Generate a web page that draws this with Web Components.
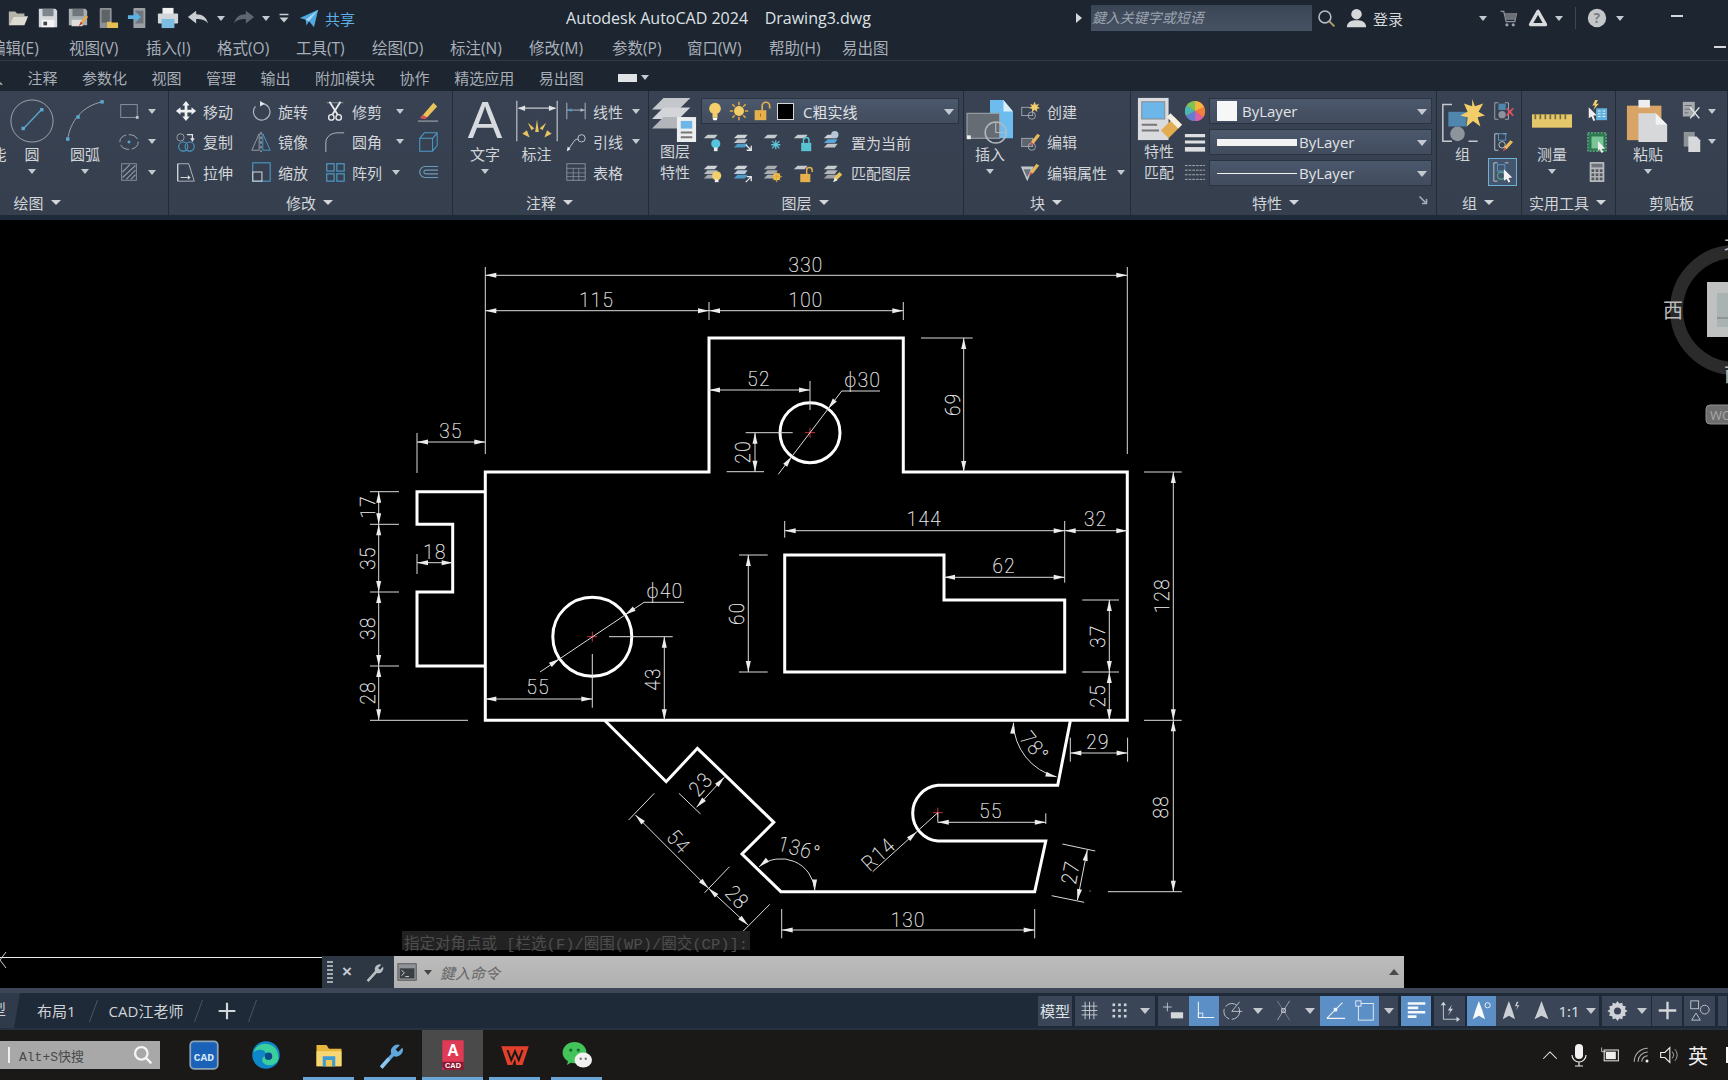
<!DOCTYPE html>
<html lang="zh">
<head>
<meta charset="utf-8">
<title>Autodesk AutoCAD 2024</title>
<style>
  html, body { margin: 0; height: 100%; background: #000; overflow: hidden; }
  body { font: 15px "Open Sans", "Noto Sans CJK SC", sans-serif; color: #c4c9cf; }
</style>
</head>
<body>

<cad-app>
  <cad-titlebar></cad-titlebar>
  <cad-menubar></cad-menubar>
  <cad-tabbar></cad-tabbar>

  <cad-ribbon>
    <ribbon-panel label="绘图" caret style="width:169px;--foot-pad:0 94px 0 0">
      <rb-big style="width:24px;margin-left:-13px">能</rb-big>
      <rb-big icon="circle" size="46" caret style="width:36px;margin-left:3px">圆</rb-big>
      <rb-big icon="arc" size="46" caret style="width:50px;margin-left:10px">圆弧</rb-big>
      <rb-col style="margin-left:8px">
        <rb-small icon="rect" caret="12"></rb-small>
        <rb-small icon="ellipse" caret="12"></rb-small>
        <rb-small icon="hatch" caret="12"></rb-small>
      </rb-col>
    </ribbon-panel>

    <ribbon-panel label="修改" caret style="width:284px">
      <rb-col style="width:75px;margin-left:6px">
        <rb-small icon="move">移动</rb-small>
        <rb-small icon="copy">复制</rb-small>
        <rb-small icon="stretch">拉伸</rb-small>
      </rb-col>
      <rb-col style="width:74px">
        <rb-small icon="rotate">旋转</rb-small>
        <rb-small icon="mirror">镜像</rb-small>
        <rb-small icon="scale">缩放</rb-small>
      </rb-col>
      <rb-col style="width:93px">
        <rb-small icon="trim" caret="18">修剪</rb-small>
        <rb-small icon="fillet" caret="18">圆角</rb-small>
        <rb-small icon="array" caret="14">阵列</rb-small>
      </rb-col>
      <rb-col>
        <rb-small icon="erase"></rb-small>
        <rb-small icon="box3d"></rb-small>
        <rb-small icon="offset"></rb-small>
      </rb-col>
    </ribbon-panel>

    <ribbon-panel label="注释" caret style="width:196px;--foot-pad:0 2px 0 0">
      <rb-big icon="bigA" size="46" caret style="width:36px;margin-left:14px">文字</rb-big>
      <rb-big icon="dim" size="44" style="width:37px;margin-left:15px">标注</rb-big>
      <rb-col style="margin-left:10px">
        <rb-small icon="linear" caret="13">线性</rb-small>
        <rb-small icon="leader" caret="13">引线</rb-small>
        <rb-small icon="table">表格</rb-small>
      </rb-col>
    </ribbon-panel>

    <ribbon-panel label="图层" caret style="width:315px">
      <rb-big icon="layers" size="46" lines="2" style="width:38px;margin-left:7px">图层<br>特性</rb-big>
      <rb-col style="margin-left:7px;width:258px">
        <rb-combo style="margin-top:2px;margin-bottom:3px">
          <cad-icon name="bulb" size="20" style="margin-left:3px"></cad-icon>
          <cad-icon name="sun" size="20" style="margin-left:4px"></cad-icon>
          <cad-icon name="lock" size="20" style="margin-left:4px"></cad-icon>
          <span class="swatch" style="display:inline-block;width:15px;height:15px;background:#000;border:1px solid #d5d7da;margin-left:4px"></span>
          <span style="margin-left:9px">C粗实线</span>
        </rb-combo>
        <rb-iconrow>
          <cad-icon name="lyOff"></cad-icon><cad-icon name="lyIso"></cad-icon><cad-icon name="lyFrz"></cad-icon><cad-icon name="lyLock"></cad-icon><cad-icon name="lyCur"></cad-icon>
          <span style="margin-left:-1px">置为当前</span>
        </rb-iconrow>
        <rb-iconrow>
          <cad-icon name="lyOn"></cad-icon><cad-icon name="lyUn"></cad-icon><cad-icon name="lyThaw"></cad-icon><cad-icon name="lyOpen"></cad-icon><cad-icon name="lyMatch"></cad-icon>
          <span style="margin-left:-1px">匹配图层</span>
        </rb-iconrow>
      </rb-col>
    </ribbon-panel>

    <ribbon-panel label="块" caret style="width:167px;--foot-pad:0 2px 0 0">
      <rb-big icon="insert" size="46" caret style="width:40px;margin-left:6px">插入</rb-big>
      <rb-col style="margin-left:9px">
        <rb-small icon="create">创建</rb-small>
        <rb-small icon="edit">编辑</rb-small>
        <rb-small icon="editattr" caret="14">编辑属性</rb-small>
      </rb-col>
    </ribbon-panel>

    <ribbon-panel label="特性" caret style="width:306px;--foot-pad:0 16px 0 0">
      <rb-big icon="match" size="46" lines="2" style="width:38px;margin-left:9px">特性<br>匹配</rb-big>
      <rb-col style="margin-left:6px;width:22px">
        <rb-small icon="wheel"></rb-small>
        <rb-small icon="lweight"></rb-small>
        <rb-small icon="ltype"></rb-small>
      </rb-col>
      <rb-col style="margin-left:3px;width:223px;gap:5px;padding-top:2px">
        <rb-combo><span class="white" style="display:inline-block;width:20px;height:20px;background:#f7f7f7;margin-left:7px"></span><span style="margin-left:5px">ByLayer</span></rb-combo>
        <rb-combo><span style="display:inline-block;width:80px;height:7px;background:#f2f2f2;margin-left:7px"></span><span style="margin-left:2px">ByLayer</span></rb-combo>
        <rb-combo><span style="display:inline-block;width:80px;height:1px;background:#f2f2f2;margin-left:7px"></span><span style="margin-left:2px">ByLayer</span></rb-combo>
      </rb-col>
      <cad-icon slot="corner" name="launch" size="12"></cad-icon>
    </ribbon-panel>

    <ribbon-panel label="组" caret style="width:85px">
      <rb-big icon="group" size="44" style="width:35px;margin-left:8px">组</rb-big>
      <rb-col style="margin-left:8px;align-items:center;width:29px">
        <rb-small icon="ungroup"></rb-small>
        <rb-small icon="groupedit"></rb-small>
        <rb-small icon="groupsel" style="outline:1px solid #6fb0d8;outline-offset:-1px;background:#44566d;width:29px;height:28px;justify-content:center;margin-top:1px"></rb-small>
      </rb-col>
    </ribbon-panel>

    <ribbon-panel label="实用工具" caret style="width:94px">
      <rb-big icon="ruler" size="40" caret style="width:40px;margin-left:10px">测量</rb-big>
      <rb-col style="margin-left:14px">
        <rb-small icon="quick"></rb-small>
        <rb-small icon="areasel"></rb-small>
        <rb-small icon="calc"></rb-small>
      </rb-col>
    </ribbon-panel>

    <ribbon-panel label="剪贴板" style="width:112px;--foot-pad:0 0 0 0">
      <rb-big icon="paste" size="46" caret style="width:36px;margin-left:14px">粘贴</rb-big>
      <rb-col style="margin-left:15px">
        <rb-small icon="cut" caret="9"></rb-small>
        <rb-small icon="clip" caret="9"></rb-small>
      </rb-col>
    </ribbon-panel>
  </cad-ribbon>

  <cad-canvas>
    <cad-command></cad-command>
  </cad-canvas>

  <cad-status>
    <status-btn w="34" text="模型"></status-btn>
    <status-group>
      <status-btn w="29" icon="grid"></status-btn><status-btn w="30" icon="dots"></status-btn><status-btn w="21" caret></status-btn>
    </status-group>
    <status-group>
      <status-btn w="31" icon="infer"></status-btn><status-btn w="30" icon="ortho" on></status-btn><status-btn w="28" icon="polar"></status-btn><status-btn w="21" caret></status-btn><status-btn w="31" icon="iso"></status-btn><status-btn w="21" caret></status-btn><status-btn w="30" icon="snap3" on></status-btn><status-btn w="29" icon="osnap" on></status-btn><status-btn w="19" caret></status-btn>
    </status-group>
    <status-btn w="30" icon="lwt" on></status-btn>
    <status-btn w="31" icon="ucs"></status-btn>
    <status-group style="margin-left:-1px">
      <status-btn w="29" icon="anno1" on></status-btn><status-btn w="30" icon="anno2"></status-btn><status-btn w="30" icon="anno3"></status-btn><status-btn w="26" text="1:1"></status-btn><status-btn w="17" caret></status-btn>
    </status-group>
    <status-group>
      <status-btn w="30" icon="gear"></status-btn><status-btn w="19" caret></status-btn>
    </status-group>
    <status-btn w="30" icon="plus" style="margin-left:-2px"></status-btn>
    <status-btn w="31" icon="shapes" style="margin-left:-1px"></status-btn>
    <status-btn w="9"></status-btn>
  </cad-status>

  <cad-taskbar></cad-taskbar>
</cad-app>

<script>
// Inline icon set. All drawn on a 24 x 24 box.
const S = 'fill="none" stroke="';
const lyr = (y, c) => `<path d="M6 ${y}h11l-3 4H2z" fill="${c}"/>`;
const stack = (a, b, c) => lyr(4, a) + lyr(9, b) + lyr(14, c);

const ICONS = {
  open: `<path d="M2 5h7l2 2h8v3H7L4 20H2z" fill="#b5b3aa"/><path d="M7 10h16l-4 10H3z" fill="#dedcd2"/>`,
  save: `<path d="M2 2h18l2 2v18H2z" fill="#d5d9dd"/><rect x="6" y="2" width="12" height="8" fill="#7f868d"/><rect x="5" y="14" width="14" height="8" fill="#f4f4f4"/><rect x="7" y="16" width="4" height="4" fill="#444"/>`,
  saveas: `<path d="M2 2h18l2 2v16H2z" fill="#a9aeb3"/><rect x="6" y="2" width="12" height="8" fill="#6f767c"/><rect x="5" y="14" width="12" height="7" fill="#ddd"/><path d="M13 21l2-5 6-7 2 2-6 7z" fill="#e8a94b"/><path d="M13 21l2-5 2 2z" fill="#c33"/>`,
  sheet: `<rect x="3" y="1" width="13" height="22" rx="1" fill="#8d9196"/><rect x="5" y="3" width="9" height="14" fill="#5e6368"/><path d="M11 16h4l1 1h7v6H11z" fill="#e6be52"/>`,
  imp: `<rect x="7" y="1" width="13" height="22" rx="1" fill="#9ba0a5"/><rect x="9" y="4" width="9" height="14" fill="#70767c"/><path d="M1 9h8V5l6 6-6 6v-4H1z" fill="#59b2e2"/>`,
  print: `<rect x="6" y="1" width="12" height="7" fill="#f0f0f0"/><rect x="1" y="7" width="22" height="11" rx="1" fill="#d2d6d9"/><rect x="5" y="13" width="14" height="10" fill="#7dbde2"/>`,
  undo: `<path d="M1 11l9-7v4c7 0 11 3 13 10-3-4-7-5-13-5v5z" fill="#c9cdd2"/>`,
  redo: `<path d="M23 11l-9-7v4C7 8 3 11 1 18c3-4 7-5 13-5v5z" fill="#5f666f"/>`,
  qatmenu: `<path d="M3 5h18" stroke="#c9cdd2" stroke-width="3"/><path d="M3 11h18l-9 10z" fill="#c9cdd2"/>`,
  share: `<path d="M1 12L23 2l-5 21-6-7-3 5-1-7z" fill="#4fa8e0"/><path d="M8 14L23 2 12 16z" fill="#a8d8f5"/>`,
  search: `<circle cx="10" cy="10" r="7.5" ${S}#b6bcc3" stroke-width="2"/><path d="M15.5 15.5L22 22" stroke="#b39a6a" stroke-width="2.4"/>`,
  user: `<circle cx="12" cy="7" r="6" fill="#d6d8da"/><path d="M1 22c0-6 5-8 11-8s11 2 11 8z" fill="#d6d8da"/>`,
  cart: `<path d="M2 3h4l3 13h11l2-10H7" ${S}#8f949a" stroke-width="1.6"/><path d="M7 5h15l-2 9H9z" fill="#6c7178"/><circle cx="10" cy="20" r="2" fill="#9a9fa5"/><circle cx="18" cy="20" r="2" fill="#9a9fa5"/>`,
  a360: `<path d="M12 4L3 20h18z" ${S}#d8dadd" stroke-width="4" stroke-linejoin="round"/>`,
  help: `<circle cx="12" cy="12" r="11" fill="#c4c7ca"/><text x="12" y="18" text-anchor="middle" font-size="16" font-weight="700" font-family="Open Sans" fill="#7a7e83">?</text>`,

  circle: `<circle cx="12" cy="12" r="11" ${S}#aab1b8" stroke-width=".45"/><path d="M7.5 16L17 6" stroke="#5aa7cf" stroke-width=".7"/><rect x="6.5" y="15" width="1.8" height="1.8" fill="#5aa7cf"/><rect x="16.2" y="5.200" width="1.8" height="1.8" fill="#5aa7cf"/>`,
  arc: `<path d="M3 22C4 12 11 4 21 2" ${S}#aab1b8" stroke-width=".45"/><rect x="2.100" y="20.500" width="1.8" height="1.8" fill="#5aa7cf"/><rect x="7.5" y="9" width="1.8" height="1.8" fill="#5aa7cf"/><rect x="20" y="1.100" width="1.8" height="1.8" fill="#5aa7cf"/>`,
  rect: `<rect x="3" y="5" width="18" height="14" ${S}#8b96a3" stroke-width="1"/><rect x="19.5" y="17.5" width="3" height="3" fill="#c4c9cf"/>`,
  ellipse: `<ellipse cx="12" cy="12" rx="10" ry="8" ${S}#a6afb9" stroke-dasharray="11 3" stroke-width="1"/><circle cx="12" cy="12" r="1.6" fill="#5aa7cf"/>`,
  hatch: `<rect x="4" y="3" width="16" height="18" ${S}#8b96a3"/><path d="M5 12l8-8M5 18L19 5M9 20l10-10M14 20l5-5" stroke="#8b96a3" stroke-width="1.4"/>`,
  move: `<path d="M12 1l4 5h-2.5v4.5H18V8l5 4-5 4v-2.5h-4.5V18H16l-4 5-4-5h2.5v-4.500H6V16l-5-4 5-4v2.500h4.500V6H8z" fill="#eef0f2"/>`,
  rotate: `<path d="M14 4a9 9 0 1 1-8 3" ${S}#aeb5bc" stroke-width="1.3"/><path d="M11 1l5 3-5 3z" fill="#e8eaec"/>`,
  trim: `<path d="M3 3h18" stroke="#7f8994" stroke-width="1.2"/><path d="M6 2l9 14M18 2L9 16" stroke="#e8eaec" stroke-width="2"/><circle cx="8" cy="19" r="3" ${S}#e8eaec" stroke-width="1.500"/><circle cx="16" cy="19" r="3" ${S}#e8eaec" stroke-width="1.500"/>`,
  erase: `<path d="M6 17L18 3l4 4-11 12z" fill="#e9c25a"/><path d="M3 20l3-4 5 3-2 2z" fill="#d4525c"/><path d="M1 23h22" stroke="#b7bdc3"/>`,
  copy: `<circle cx="6" cy="7" r="4" ${S}#9aa4ae"/><path d="M13 4h6v5" ${S}#dfe2e5" stroke-width="1.4"/><path d="M16.500 8l2.500 4 2.500-4z" fill="#dfe2e5"/><circle cx="9" cy="17" r="5" ${S}#4d9ac6" stroke-width="1.200"/><circle cx="16" cy="17" r="5" ${S}#4d9ac6" stroke-width="1.200"/>`,
  mirror: `<path d="M10 3v18H2z" ${S}#9aa4ae"/><path d="M14 3v18h8z" ${S}#4d9ac6"/><path d="M12 1v22" stroke="#d0d4d8" stroke-dasharray="3 2"/>`,
  fillet: `<path d="M2 23V13C2 6 8 2 15 2h7" ${S}#bcc2c8" stroke-width="1"/>`,
  box3d: `<path d="M3 8h14v14H3zM3 8l5-6h14v14l-5 6M17 8l5-6" ${S}#4d9ac6" stroke-width="1.100"/>`,
  stretch: `<path d="M3 3h12l6 19H3z" ${S}#b5bcc3"/><path d="M3 3v19" stroke="#e8eaec"/><path d="M6 18h8" stroke="#dfe2e5"/><path d="M14 15.500l3 2.500-3 2.500z" fill="#dfe2e5"/>`,
  scale: `<rect x="3" y="2" width="19" height="20" ${S}#4d9ac6" stroke-width="1.200"/><rect x="3" y="12" width="10" height="10" ${S}#c9cdd2" stroke-width="1.200"/>`,
  array: `<g ${S}#4d9ac6" stroke-width="1.300"><rect x="3" y="3" width="8" height="8"/><rect x="14" y="3" width="8" height="8"/><rect x="3" y="14" width="8" height="8"/><rect x="14" y="14" width="8" height="8"/></g>`,
  offset: `<path d="M23 6H9a6 6 0 0 0 0 12h14M23 10H9.500a2 2 0 0 0 0 4H23" ${S}#6c9bb8" stroke-width="1.300"/>`,
  bigA: `<text x="12" y="21" text-anchor="middle" font-size="27" font-family="Liberation Sans" font-weight="400" fill="#d7dade">A</text>`,
  dim: `<path d="M1 1v22M23 1v22" stroke="#c9cdd2" stroke-width=".6"/><path d="M2 5h20" stroke="#c9cdd2" stroke-width=".6"/><path d="M1.500 5l4-1.500v3zM22.500 5l-4-1.500v3z" fill="#dfe2e5"/><path d="M4 19l4 2-1.500-4zM20 19l-4 2 1.500-4zM12 11l-1 7h2z" fill="#e6c45f"/><path d="M7 13l2 4 1.500-1zM17 13l-2 4-1.500-1z" fill="#e6c45f"/>`,
  linear: `<path d="M2 3v18M22 3v18M2 11h20" stroke="#b5bcc3" stroke-width="1"/><path d="M3 11l4-2v4z" fill="#4d9ac6"/><path d="M21 11l-4-2v4z" fill="#b5bcc3"/>`,
  leader: `<path d="M3 21L10 11c1-2 3-2 5-2" ${S}#c9cdd2" stroke-width="1"/><path d="M2 22l1-5 3 3z" fill="#e8eaec"/><circle cx="18" cy="8" r="4" ${S}#c9cdd2"/>`,
  table: `<rect x="2" y="3" width="20" height="18" ${S}#8b96a3"/><path d="M2 8h20M2 13h20M2 17h20M9 8v13M15 8v13" stroke="#8b96a3" stroke-width=".8"/>`,
  layers: `<path d="M6 1h14l-6 6H0z" fill="#c4c7cb"/><path d="M6 6h14l-6 6H0z" fill="#d3d5d8"/><path d="M6 11h14l-6 6H0z" fill="#b2b5b9"/><rect x="13" y="11" width="10" height="13" fill="#eceef0"/><rect x="15" y="13" width="6" height="4" fill="#6db6ea"/><path d="M15 19h6M15 21.500h6" stroke="#777"/>`,
  bulb: `<circle cx="12" cy="9" r="7" fill="#f2cf6b"/><path d="M9 15h6v5H9z" fill="#f2cf6b"/><path d="M9 20h6l-1 3h-4z" fill="#fff"/>`,
  sun: `<circle cx="12" cy="12" r="6" fill="#f3cd68"/><path d="M12 1v4M12 19v4M1 12h4M19 12h4M4 4l3 3M17 17l3 3M20 4l-3 3M7 17l-3 3" stroke="#e9a83e" stroke-width="1.800"/>`,
  lock: `<rect x="2" y="11" width="14" height="12" fill="#e8b04c"/><path d="M11 11V6a4.500 4.500 0 0 1 9 0v3" ${S}#e8b04c" stroke-width="2"/><path d="M9 15v4" stroke="#93621c"/>`,
  lyOff: lyr(4, '#c6c9cd') + `<circle cx="15" cy="14" r="5" fill="#56c4dc"/><rect x="13" y="18" width="4" height="4" fill="#e8eaec"/>`,
  lyIso: stack('#d0d3d6', '#c0c4c8', '#4d9ac6') + `<path d="M15 15l6 6M21 16v5h-5" ${S}#e8eaec" stroke-width="1.400"/>`,
  lyFrz: lyr(4, '#c6c9cd') + `<path d="M15 10v10M10 15h10M11 11l8 8M19 11l-8 8" stroke="#5cc6d8" stroke-width="1.400"/>`,
  lyLock: lyr(4, '#c6c9cd') + `<rect x="10" y="13" width="11" height="9" fill="#59c3cf"/><path d="M12.500 13V10a3 3 0 0 1 6 0v3" ${S}#59c3cf" stroke-width="1.600"/>`,
  lyCur: stack('#d0d3d6', '#58a7d6', '#c0c4c8') + `<circle cx="14" cy="4" r="4" fill="#b6c6d6"/>`,
  lyOn: stack('#d0d3d6', '#b8bcc0', '#a4a8ac') + `<circle cx="16" cy="15" r="5" fill="#f2cf6b"/><rect x="14" y="19" width="4" height="3" fill="#eee"/>`,
  lyUn: stack('#d0d3d6', '#bcd', '#4d9ac6') + `<path d="M15 22l6-6M16 16h5v5" ${S}#e8eaec" stroke-width="1.400"/>`,
  lyThaw: stack('#a8acb0', '#a8acb0', '#a8acb0') + `<circle cx="16" cy="16" r="4" fill="#f2c75c"/><path d="M16 10v12M10 16h12M12 12l8 8M20 12l-8 8" stroke="#e0a63a"/>`,
  lyOpen: lyr(4, '#c6c9cd') + `<rect x="9" y="13" width="11" height="9" fill="#e8b04c"/><path d="M16 13V9a3 3 0 0 1 6 0v2" ${S}#e8b04c" stroke-width="1.600"/>`,
  lyMatch: stack('#c6c9cd', '#b2b6ba', '#9ea2a6') + `<path d="M13 17l6-6 3 3-6 6z" fill="#e9c25a"/><path d="M12 22l2-5 3 3z" fill="#eee"/>`,
  insert: `<path d="M12 1h7l5 6v14H12z" fill="#6cbcef"/><path d="M19 1l5 6h-5z" fill="#d8eefb"/><rect x="0" y="8" width="17" height="13" fill="#666c74" stroke="#9aa0a6" stroke-width=".6"/><circle cx="15" cy="18" r="5.500" ${S}#b4b9bf" stroke-width=".8" /><path d="M15 13v5h5" stroke="#b4b9bf" stroke-width=".6" fill="none"/><rect x="0" y="19.500" width="2" height="2" fill="#eee"/>`,
  create: `<rect x="3" y="8" width="12" height="9" ${S}#a4aab0" fill="#5d646d"/><circle cx="14" cy="17" r="4" ${S}#a4aab0"/><path d="M17 2l1.500 3.500L22 4l-2 3 3 2-3.500.5L20 13l-3-2.500L14 13l.5-3.500L11 9l3-2-2-3 3.500 1.500z" fill="#f2cf6b"/>`,
  edit: `<rect x="3" y="8" width="12" height="9" fill="#5d646d" stroke="#a4aab0"/><circle cx="14" cy="17" r="4" ${S}#a4aab0"/><path d="M13 12l7-9 3 2-7 9z" fill="#e9b958"/><path d="M13 12l-1 4 4-2z" fill="#d4525c"/>`,
  editattr: `<path d="M2 6h14l-7 16z" fill="#c4c7ca"/><path d="M5 9h8l-4 9z" fill="#69717a"/><path d="M12 12l7-9 3 2-7 9z" fill="#e9b958"/><path d="M12 12l-1 4 4-2z" fill="#d4525c"/>`,
  match: `<rect x="1" y="1" width="16" height="22" fill="#d9dbde"/><rect x="3" y="3" width="12" height="9" fill="#6db6ea" stroke="#888" stroke-width=".5"/><path d="M3 15h8M3 18h9" stroke="#777"/><path d="M13 18l7-7 4 4-7 7z" fill="#e3ac50"/><path d="M18 9l6 6-2 2-6-6z" fill="#f4f0e4"/>`,
  wheel: `<circle cx="12" cy="12" r="11" fill="#e25b4f"/><path d="M12 12L12 1A11 11 0 0 1 22 8z" fill="#f3b53b"/><path d="M12 12L22 8A11 11 0 0 1 21 19z" fill="#f07f3d"/><path d="M12 12l9 7A11 11 0 0 1 12 23z" fill="#d85faa"/><path d="M12 12v11A11 11 0 0 1 2 17z" fill="#5e7fd0"/><path d="M12 12L2 17A11 11 0 0 1 3 6z" fill="#47b9b1"/><path d="M12 12L3 6A11 11 0 0 1 12 1z" fill="#79c455"/>`,
  lweight: `<path d="M1 5h22M1 12h22" stroke="#dcdee0" stroke-width="3.500"/><path d="M1 20h22" stroke="#dcdee0" stroke-width="5"/>`,
  ltype: `<path d="M1 5h22M1 10h22M1 15h22M1 20h22" stroke="#aeb3b8" stroke-dasharray="3 1" stroke-width="1"/>`,
  group: `<path d="M6 3H1v20h5M15 23h5" ${S}#c4c9cf" stroke-width=".8"/><rect x="4" y="7" width="10" height="8" fill="#4f86ad"/><circle cx="9" cy="19" r="4" fill="#8d949b"/><path d="M17 0l1.500 4L23 2.500 20.500 7 24 9l-4 1 1.500 5-4-3-3.500 3 .5-5-4-1 4-2-2-4.500L17 4z" fill="#f3cd68"/>`,
  ungroup: `<path d="M7 3H3v18h4M14 3h4v18h-4" ${S}#a4aab0"/><rect x="7" y="4" width="8" height="7" fill="#4f86ad"/><circle cx="11" cy="16" r="4" fill="#8d949b"/><path d="M16 9l7 8M23 9l-7 8" stroke="#e0525c" stroke-width="2"/>`,
  groupedit: `<path d="M7 3H3v18h4M12 3h4" ${S}#c4c9cf"/><rect x="7" y="3" width="8" height="7" ${S}#5a9ac8"/><circle cx="11" cy="15" r="3.500" ${S}#c4c9cf"/><path d="M13 18l7-8 3 2-7 8z" fill="#e9b958"/><path d="M13 18l-1 4 4-2z" fill="#d4525c"/>`,
  groupsel: `<path d="M6 2H2v20h4M14 2h4" ${S}#c4c9cf"/><rect x="6" y="4" width="8" height="7" ${S}#5a9ac8"/><circle cx="10" cy="16" r="4" ${S}#62c08e"/><path d="M13 9l9 9-4 .5 2 4-2 1-2-4-3 2z" fill="#f2f2f2"/>`,
  ruler: `<rect x="0" y="8" width="24" height="8" fill="#e5c76c"/><path d="M2 8v3M5 8v3M8 8v3M11 8v3M14 8v3M17 8v3M20 8v3" stroke="#7c6a35"/>`,
  quick: `<path d="M3 8l9 9-4 0 2 5-2 1-2-5-3 2z" fill="#eee"/><rect x="11" y="9" width="12" height="13" fill="#61b0de"/><path d="M13 12h3M18 12h3M13 15h3M18 15h3M13 18h3M18 18h3" stroke="#e8f4fb"/><path d="M10 0l-3 6h3l-2 5 6-7h-3l2-4z" fill="#f3cd68"/>`,
  areasel: `<rect x="2" y="2" width="20" height="20" fill="#2e7850" stroke="#7fd1a0" stroke-dasharray="2 1.500"/><rect x="6" y="6" width="13" height="13" fill="#79c596"/><path d="M13 11l8 8-4 .5 2 3.500-2 1-2-4-2 2z" fill="#eee"/>`,
  calc: `<rect x="4" y="1" width="16" height="22" rx="1" fill="#b5b9bd"/><rect x="6" y="3" width="12" height="4" fill="#6e747a"/><g fill="#55595e"><rect x="6" y="9" width="3" height="3"/><rect x="10.500" y="9" width="3" height="3"/><rect x="15" y="9" width="3" height="3"/><rect x="6" y="13.500" width="3" height="3"/><rect x="10.500" y="13.500" width="3" height="3"/><rect x="15" y="13.500" width="3" height="3"/><rect x="6" y="18" width="3" height="3"/><rect x="10.500" y="18" width="3" height="3"/><rect x="15" y="18" width="3" height="3"/></g>`,
  paste: `<rect x="1" y="4" width="18" height="18" fill="#d9a566"/><rect x="7" y="1" width="6" height="4" fill="#eee"/><path d="M7 8h9l6 6v9H7z" fill="#d6d8da"/><path d="M16 8l6 6h-6z" fill="#f2f2f2"/>`,
  cut: `<rect x="2" y="2" width="13" height="16" fill="#a6abb0"/><path d="M4 6h8M4 10h6M4 14h4" stroke="#666"/><path d="M10 8l10 12M20 8L10 20" stroke="#e8eaec" stroke-width="1.500"/>`,
  clip: `<rect x="3" y="1" width="12" height="16" fill="#8e9398"/><path d="M8 6h9l4 4v13H8z" fill="#d6d8da"/>`,
  launch: `<path d="M3 3l12 12M17 8v9H8" ${S}#a9afb6" stroke-width="3"/>`,

  wrench: `<path d="M4 21L13 11a5.500 5.500 0 0 1 7-7l-3.500 3.500 2 2L22 6a5.500 5.500 0 0 1-7 7l-9 10z" fill="#b9bec3"/>`,
  term: `<rect x="1" y="3" width="20" height="18" fill="#8e9398" stroke="#555"/><rect x="3" y="8" width="16" height="11" fill="#3a3f44"/><path d="M5 10l3 3-3 3M9 17h4" ${S}#ddd"/>`,
  grid: `<path d="M3 7h18M3 12h18M3 17h18M7 2v20M12 2v20M17 2v20" stroke="#cfd3d7" stroke-width="1"/>`,
  dots: `<g fill="#cfd3d7"><rect x="4" y="4" width="3" height="3"/><rect x="10.500" y="4" width="3" height="3"/><rect x="17" y="4" width="3" height="3"/><rect x="4" y="10.500" width="3" height="3"/><rect x="10.500" y="10.500" width="3" height="3"/><rect x="17" y="10.500" width="3" height="3"/><rect x="4" y="17" width="3" height="3"/><rect x="10.500" y="17" width="3" height="3"/><rect x="17" y="17" width="3" height="3"/></g>`,
  infer: `<path d="M5 3v10M0 8h10" stroke="#c9cdd2"/><rect x="9" y="14" width="14" height="7" fill="#d4d7da"/>`,
  ortho: `<path d="M5 2v18h18" ${S}#eef3f7" stroke-width="1.200"/><rect x="5" y="15" width="5" height="5" ${S}#eef3f7"/>`,
  polar: `<circle cx="10" cy="13" r="9" ${S}#c9cdd2" stroke-dasharray="14 3"/><path d="M10 13h12M10 13l9-11" stroke="#c9cdd2"/>`,
  iso: `<path d="M5 1l14 22" stroke="#7c858f"/><path d="M19 1L5 23" stroke="#aab1b8"/><rect x="10" y="10" width="4" height="4" ${S}#dfe2e5"/>`,
  snap3: `<path d="M2 21h21M2 21L20 3" ${S}#eef3f7" stroke-width="1.200"/><rect x="10" y="9" width="4" height="4" fill="#eef3f7"/>`,
  osnap: `<rect x="5" y="4" width="17" height="19" ${S}#eef3f7" stroke-width="1"/><rect x="2" y="1" width="6" height="6" fill="#5b8fc6" stroke="#eef3f7"/>`,
  lwt: `<path d="M2 4h20M2 9h12M2 14h20M2 19h10" stroke="#f5f7f9" stroke-width="3"/>`,
  ucs: `<path d="M5 22V4M5 22h17" stroke="#d0d4d8"/><path d="M2 6l3-4 3 4zM20 19l4 3-4 3z" fill="#d0d4d8"/><path d="M15 5l-5 7h3l-3 6 6-8h-3z" fill="#d0d4d8"/>`,
  anno1: `<path d="M9 1l4 11 3 10-7-4-7 4 3-10z" fill="#f7f9fb"/><circle cx="19" cy="6" r="3" ${S}#f7f9fb"/>`,
  anno2: `<path d="M9 1l4 11 3 10-7-4-7 4 3-10z" fill="#ccd0d4"/><path d="M18 2l-2 5h3l-2 5 4-6h-3l2-4z" fill="#ccd0d4"/>`,
  anno3: `<path d="M12 1l4 11 4 10-8-4-8 4 4-10z" fill="#ccd0d4"/>`,
  gear: `<path d="M12 1l2 3 3.500-1 .5 3.500 3.500.5-1 3.500 3 2-3 2 1 3.500-3.500.5-.5 3.500-3.500-1-2 3-2-3-3.500 1-.5-3.500L2.500 18l1-3.500-3-2 3-2-1-3.500L6 6.500 6.500 3l3.500 1z" fill="#cfd3d7"/><circle cx="12" cy="12.500" r="4" fill="#3a4657"/>`,
  plus: `<path d="M12 2v20M2 12h20" stroke="#d4d7da" stroke-width="2.600"/>`,
  shapes: `<rect x="2" y="1" width="9" height="9" ${S}#c9cdd2"/><circle cx="18" cy="11" r="5" ${S}#c9cdd2"/><path d="M8 15l5 8H3z" ${S}#c9cdd2"/>`,

  tbCad: `<rect x="1" y="1" width="22" height="22" rx="3" fill="#1a62b8" stroke="#8da3b8" stroke-width="1.400"/><text x="12" y="16.500" text-anchor="middle" font-size="9" font-weight="700" font-family="Liberation Mono" fill="#d8e8f6">CAD</text>`,
  tbEdge: `<circle cx="12" cy="12" r="11" fill="#0f86c8"/><path d="M22 14C22 7 17 3 11 3 7 3 3 6 2 10c3-3 9-3 10 1 0 2-3 2-3 5s4 5 8 4c3-1 5-3 5-6z" fill="#3ccf9e"/><circle cx="14" cy="13" r="3" fill="#0b4a88"/>`,
  tbFolder: `<path d="M2 4h8l2 3h10v14H2z" fill="#e7b73d"/><rect x="2" y="9" width="20" height="12" fill="#f7d774"/><rect x="7" y="13" width="10" height="8" fill="#3d9ad6"/><rect x="9.500" y="16" width="5" height="5" fill="#f2c94c"/>`,
  tbTool: `<path d="M4 21L13 11a5.500 5.500 0 0 1 7-7l-3.500 3.500 2 2L22 6a5.500 5.500 0 0 1-7 7l-9 10z" fill="#5fa8de"/><path d="M4 21l6-7 2 2-6 7z" fill="#8cc6ee"/>`,
  tbAcad: `<path d="M4 1h16v20l-3 2H4z" fill="#e13a55"/><path d="M4 17h16v6H6l-2-2z" fill="#8d1834"/><text x="12" y="13" text-anchor="middle" font-size="12" font-weight="700" font-family="Liberation Sans" fill="#fff">A</text><text x="12" y="22" text-anchor="middle" font-size="5.500" font-weight="700" font-family="Liberation Sans" fill="#fff">CAD</text>`,
  tbWps: `<path d="M1 5h22l-5 15h-5l-1-5-2 5H6z" fill="#e3402b"/><path d="M6 8l3 8 3-7 3 7 3-8" ${S}#1b1917" stroke-width="1.600"/>`,
  tbChat: `<ellipse cx="10" cy="10" rx="9.500" ry="8.500" fill="#42c45a"/><path d="M5 16l-1 4 5-3z" fill="#42c45a"/><ellipse cx="17" cy="16" rx="7" ry="6" fill="#f1f1f1"/><circle cx="7" cy="8" r="1.300" fill="#14692b"/><circle cx="13" cy="8" r="1.300" fill="#14692b"/><circle cx="15" cy="15" r="1" fill="#777"/><circle cx="19" cy="15" r="1" fill="#777"/>`,
  mic: `<rect x="8" y="1" width="8" height="15" rx="4" fill="#f2f2f2"/><path d="M5 12a7 7 0 0 0 14 0M12 19v4M8 23h8" ${S}#e8e8e8" stroke-width="1.200"/>`,
  batt: `<rect x="5" y="6" width="17" height="13" ${S}#eee" stroke-width="1.200"/><rect x="7" y="8" width="12" height="9" fill="#eee"/><path d="M2 3v5h5" ${S}#ddd"/>`,
  wifi: `<path d="M3 21a18 18 0 0 1 18-18M8 21a13 13 0 0 1 13-13M13 21a8 8 0 0 1 8-8" ${S}#aaa" stroke-width="1.500"/><circle cx="20" cy="20" r="2" fill="#eee"/>`,
  speaker: `<path d="M2 9h5l6-6v18l-6-6H2z" ${S}#eee" stroke-width="1.300"/><path d="M16 8a6 6 0 0 1 0 8M19 5a10 10 0 0 1 0 14" ${S}#bbb"/>`,
  chevron: `<path d="M3 17l9-9 9 9" ${S}#eee" stroke-width="1.400"/>`,
  searchTb: `<circle cx="10" cy="10" r="7.500" ${S}#f4f4f4" stroke-width="2.800"/><path d="M15.500 15.500L22 22" stroke="#f4f4f4" stroke-width="2.800"/>`
};

// Small helper so every element below is written the same way
class ShadowElement extends HTMLElement {
  constructor() {
    super();
    this.attachShadow({ mode: 'open' });
  }
  connectedCallback() {
    this.shadowRoot.innerHTML = this.render();
  }
  render() { return ''; }
}

const caretCss = `
  .caret { width:0; height:0; border:4px solid transparent; border-top:5px solid #c4c9cf; border-bottom:0; display:inline-block; flex:none; }
`;

class CadIcon extends ShadowElement {
  render() {
    const size = this.getAttribute('size') || 22;
    return `<style>:host{display:inline-flex;flex:none;width:${size}px;height:${size}px}svg{display:block;overflow:visible}</style>
      <svg viewBox="0 0 24 24" width="${size}" height="${size}">${ICONS[this.getAttribute('name')] || ''}</svg>`;
  }
}

class CadApp extends ShadowElement {
  render() {
    return `<style>:host{display:flex;flex-direction:column;width:1728px;height:1080px;overflow:hidden}</style><slot></slot>`;
  }
}

class CadTitlebar extends ShadowElement {
  render() {
    const qat = ['open', 'save', 'saveas', 'sheet', 'imp', 'print', 'undo'];
    return `<style>${caretCss}
      :host{display:flex;align-items:center;height:36px;background:#1c2530;padding-left:7px;box-sizing:border-box;color:#d4d7db}
      .qat{display:flex;align-items:center;gap:8px}
      .share{color:#5eaee6;font-size:15px;margin-left:6px}
      .title{margin-left:211px;font-size:16px;white-space:pre;color:#dfe2e5}
      .search{width:221px;height:26px;background:linear-gradient(#3a4554,#465163);margin-left:9px;font-size:14px;font-style:italic;color:#9ba4b0;line-height:26px;padding-left:1px;box-sizing:border-box}
      .play{width:0;height:0;border:5px solid transparent;border-left:6px solid #d4d7db;border-right:0;margin-left:205px}
      .login{font-size:15px;margin-left:6px;width:106px}
      .sep{width:1px;height:22px;background:#3c4654;margin:0 11px 0 12px}
      .dash{width:12px;height:1.500px;background:#d4d7db;margin-left:47px;margin-bottom:4px}
      </style>
      <div class="qat">${qat.map(n => `<cad-icon name="${n}"></cad-icon>`).join('')}</div>
      <span class="caret" style="margin-left:8px"></span>
      <cad-icon name="redo" style="margin-left:8px"></cad-icon>
      <span class="caret" style="margin-left:7px"></span>
      <cad-icon name="qatmenu" size="12" style="margin-left:8px"></cad-icon>
      <cad-icon name="share" size="20" style="margin-left:9px"></cad-icon>
      <span class="share">共享</span>
      <span class="title">Autodesk AutoCAD 2024    Drawing3.dwg</span>
      <span class="play"></span>
      <div class="search">鍵入关键字或短语</div>
      <cad-icon name="search" size="19" style="margin-left:5px"></cad-icon>
      <cad-icon name="user" size="21" style="margin-left:10px"></cad-icon>
      <span class="login">登录</span>
      <span class="caret"></span>
      <cad-icon name="cart" size="19" style="margin-left:12px"></cad-icon>
      <cad-icon name="a360" size="20" style="margin-left:10px"></cad-icon>
      <span class="caret" style="margin-left:7px"></span>
      <span class="sep"></span>
      <cad-icon name="help" size="20"></cad-icon>
      <span class="caret" style="margin-left:9px"></span>
      <span class="dash"></span>`;
  }
}

class CadMenubar extends ShadowElement {
  render() {
    const items = ['编辑(E)', '视图(V)', '插入(I)', '格式(O)', '工具(T)', '绘图(D)', '标注(N)', '修改(M)', '参数(P)', '窗口(W)', '帮助(H)', '易出图'];
    return `<style>
      :host{display:grid;grid-auto-flow:column;justify-content:start;align-items:center;grid-template-columns:69px 77px 71px 79px 76px 78px 79px 83px 75px 82px 73px 50px;height:25px;box-sizing:border-box;padding-bottom:2px;background:#1c2530;border-bottom:1px solid #323c49;color:#a9afb8;font-size:15.5px;position:relative;white-space:nowrap}
      span:first-of-type{margin-left:-10px}
      .dash{position:absolute;left:1714px;top:10px;width:12px;height:1.500px;background:#d4d7db}
      </style>${items.map(i => `<span>${i}</span>`).join('')}<i class="dash"></i>`;
  }
}

class CadTabbar extends ShadowElement {
  render() {
    const items = ['入', '注释', '参数化', '视图', '管理', '输出', '附加模块', '协作', '精选应用', '易出图'];
    return `<style>${caretCss}
      :host{display:flex;align-items:center;gap:24.5px;height:30px;box-sizing:border-box;padding-top:3px;background:#1c2530;color:#a8aeb6;font-size:15px}
      span:first-of-type{margin-left:-12px}
      .btn{width:19px;height:8px;background:#dfe3e6;margin-left:10px}
      </style>${items.map(i => `<span>${i}</span>`).join('')}<i class="btn"></i><i class="caret" style="margin-left:-21px"></i>`;
  }
}

class CadRibbon extends ShadowElement {
  render() {
    return `<style>:host{display:flex;height:129px;background:#1f2a38;overflow:hidden;box-sizing:border-box;padding-bottom:5px;font-size:15px;color:#d2d5d9;border-bottom:0}</style><slot></slot>`;
  }
}

class RibbonPanel extends ShadowElement {
  render() {
    const caret = this.hasAttribute('caret') ? '<i class="caret"></i>' : '';
    return `<style>${caretCss}
      :host{display:flex;flex-direction:column;flex:none;height:124px;box-sizing:border-box;background:linear-gradient(#384252,#353f4e);border-right:1.500px solid #222c39;position:relative}
      .body{display:flex;height:99px;box-sizing:border-box;padding-top:6px;flex:none}
      .foot{display:flex;align-items:center;justify-content:center;gap:7px;height:25px;padding:var(--foot-pad,0 2px 0 0);font-size:15px;color:#d2d5d9}
      .caret{border-width:5px;border-top-width:5px;border-top-color:#d2d5d9}
      ::slotted([slot=corner]){position:absolute;right:6px;bottom:8px}
      </style>
      <div class="body"><slot></slot></div>
      <div class="foot"><span>${this.getAttribute('label')}</span>${caret}</div>
      <slot name="corner"></slot>`;
  }
}

class RbBig extends ShadowElement {
  render() {
    const icon = this.getAttribute('icon');
    const size = this.getAttribute('size') || 40;
    const caret = this.hasAttribute('caret') ? '<i class="caret"></i>' : '';
    return `<style>${caretCss}
      :host{display:flex;flex-direction:column;align-items:center;flex:none}
      .ico{height:47px;display:flex;align-items:center;justify-content:center;flex:none}
      :host([lines="2"]) .ico{height:44px}
      .txt{line-height:21px;text-align:center;white-space:nowrap;height:22px}
      :host([lines="2"]) .txt{height:42px}
      .caret{margin-top:3px}
      </style>
      <div class="ico">${icon ? `<cad-icon name="${icon}" size="${size}"></cad-icon>` : ''}</div>
      <div class="txt"><slot></slot></div>${caret}`;
  }
}

class RbCol extends ShadowElement {
  render() {
    return `<style>:host{display:flex;flex-direction:column;flex:none;margin-top:-1px}</style><slot></slot>`;
  }
}

class RbSmall extends ShadowElement {
  render() {
    const gap = this.getAttribute('caret');
    const caret = gap ? `<i class="caret" style="margin-left:${gap - 4}px"></i>` : '';
    const hasText = this.textContent.trim() !== '';
    return `<style>${caretCss}
      :host{display:flex;align-items:center;height:30.500px;flex:none;white-space:nowrap}
      span{margin-left:6px}
      </style>
      <cad-icon name="${this.getAttribute('icon')}"></cad-icon>${hasText ? '<span><slot></slot></span>' : ''}${caret}`;
  }
}

class RbCombo extends ShadowElement {
  render() {
    return `<style>${caretCss}
      :host{display:flex;align-items:center;height:26px;flex:none;box-sizing:border-box;background:linear-gradient(#4b576b,#414c5e);border:1px solid #2a3340;color:#e0e3e6;position:relative}
      .caret{position:absolute;right:4px;top:10px;border-width:5px;border-top-width:6px;border-bottom:0}
      </style><slot></slot><i class="caret"></i>`;
  }
}

class RbIconrow extends ShadowElement {
  render() {
    return `<style>:host{display:flex;align-items:center;gap:8px;height:30.500px;flex:none;padding-left:1px;white-space:nowrap}</style><slot></slot>`;
  }
}

class CadDrawing extends ShadowElement {
  render() {
    const out = [];
    const dimLine = (x1, y1, x2, y2) => out.push(`<line class="d" x1="${x1}" y1="${y1}" x2="${x2}" y2="${y2}"/>`);
    const arrow = (x, y, deg) => out.push(`<path class="a" transform="translate(${x} ${y}) rotate(${deg})" d="M0 0L-11 -2.500L-11 2.500Z"/>`);
    const angle = (x1, y1, x2, y2) => Math.atan2(y2 - y1, x2 - x1) * 180 / Math.PI;
    const dim = (x1, y1, x2, y2) => {
      dimLine(x1, y1, x2, y2);
      arrow(x1, y1, angle(x2, y2, x1, y1));
      arrow(x2, y2, angle(x1, y1, x2, y2));
    };
    const label = (x, y, s, rot = 0) => out.push(`<text class="t" transform="translate(${x} ${y}) rotate(${rot}) scale(.9 1)" y="7.500" text-anchor="middle">${s}</text>`);
    const cross = (x, y) => out.push(`<path d="M${x - 5} ${y}h10M${x} ${y - 5}v10" stroke="#c8323c" stroke-width="1"/>`);
    const leader = (cx, cy, r, ax, ay, bx, by, ex) => {
      out.push(`<path class="d" fill="none" d="M${ax} ${ay}L${bx} ${by}H${ex}"/>`);
      const len = Math.hypot(bx - ax, by - ay);
      const ux = (bx - ax) / len, uy = (by - ay) / len;
      arrow(cx + ux * r, cy + uy * r, angle(bx, by, ax, ay));
      arrow(cx - ux * r, cy - uy * r, angle(ax, ay, bx, by));
    };

    // object lines
    out.push(`<g fill="none" stroke="#fff" stroke-width="3">
      <path d="M485.300 472H709V338H903.300V472H1127.300V720.300H485.300Z"/>
      <path d="M485.300 491.700H417V524.300H452.700V592H417V666H485.300"/>
      <path d="M784.700 555H944V600H1064.700V672H784.700Z"/>
      <circle cx="810" cy="432.700" r="30"/>
      <circle cx="592.300" cy="636.700" r="39.500"/>
      <path d="M604.500 720.300L666.200 781.700L697.400 748.300L773.800 822.300L742 854L780.900 891.700H1034.700L1045.800 841H937.800A28 28 0 0 1 937.800 785.300H1057.700L1070.300 721"/>
    </g>`);
    cross(810, 432.7);
    cross(592.3, 636.7);
    cross(937.8, 812.7);

    // top chains
    dim(485.3, 275.3, 1127.3, 275.3);
    dimLine(485.3, 267, 485.3, 454);
    dimLine(1127.3, 267, 1127.3, 454);
    label(806, 264, '330');
    dim(485.3, 310.7, 709, 310.7);
    dim(709, 310.7, 903.3, 310.7);
    dimLine(709, 302, 709, 320);
    dimLine(903.3, 302, 903.3, 320);
    label(596.7, 299, '115');
    label(806, 299, '100');

    // left tab
    dim(417, 442, 485.3, 442);
    dimLine(417, 433, 417, 473);
    label(451, 430, '35');
    [[491.7, 399], [524.3, 399], [592, 399], [666, 399], [720.3, 468]].forEach(([y, x]) => dimLine(370, y, x, y));
    dim(378.7, 491.7, 378.7, 524.3);
    dim(378.7, 524.3, 378.7, 592);
    dim(378.7, 592, 378.7, 666);
    dim(378.7, 666, 378.7, 720.3);
    label(367, 506.7, '17', -90);
    label(367, 558, '35', -90);
    label(367, 628, '38', -90);
    label(367, 692.7, '28', -90);
    dim(417, 562.7, 452.7, 562.7);
    dimLine(417, 554, 417, 574);
    label(435, 551, '18');

    // upper hole
    dim(709, 390, 810, 390);
    dimLine(810, 381, 810, 410);
    label(759, 378, '52');
    dim(755, 432.7, 755, 471.7);
    dimLine(745.7, 432.7, 792.7, 432.7);
    dimLine(726.7, 471.7, 764, 471.7);
    label(742, 451.7, '20', -90);
    leader(810, 432.7, 30, 778.3, 474.3, 841.7, 391, 880);
    label(862.7, 379, 'ϕ30');

    // lower hole
    leader(592.3, 636.7, 39.5, 540, 672, 644, 602.3, 684);
    label(665, 590.7, 'ϕ40');
    dim(485.3, 699, 592.3, 699);
    dimLine(592.3, 654, 592.3, 707.7);
    label(538.3, 686.7, '55');
    dim(664.3, 636.7, 664.3, 720.3);
    dimLine(609, 636.7, 672.7, 636.7);
    label(652.7, 679, '43', -90);

    // slot
    dim(748.3, 555, 748.3, 672);
    dimLine(739, 555, 767.7, 555);
    dimLine(739, 672, 767.7, 672);
    label(736.7, 613.3, '60', -90);
    dim(784.7, 530.7, 1064.7, 530.7);
    dim(1064.7, 530.7, 1127.3, 530.7);
    dimLine(784.7, 521, 784.7, 537.7);
    dimLine(1064.7, 521, 1064.7, 582.7);
    label(924.3, 518.3, '144');
    label(1095.7, 518.3, '32');
    dim(944, 577.3, 1064.7, 577.3);
    label(1004.3, 565.3, '62');
    dim(1109.3, 600, 1109.3, 672);
    dim(1109.3, 672, 1109.3, 720.3);
    dimLine(1082.3, 600, 1119, 600);
    dimLine(1082.3, 672, 1119, 672);
    label(1097.7, 636, '37', -90);
    label(1097.7, 695.7, '25', -90);

    // right side
    dim(963.7, 338, 963.7, 472);
    dimLine(921, 338, 972.7, 338);
    label(952.3, 404.3, '69', -90);
    dim(1173.3, 472, 1173.3, 720.3);
    dim(1173.3, 720.3, 1173.3, 891.7);
    dimLine(1144, 472, 1181.7, 472);
    dimLine(1144, 720.3, 1181.7, 720.3);
    dimLine(1107.9, 891.7, 1181.8, 891.7);
    label(1161, 595.7, '128', -90);
    label(1160.5, 806.7, '88', -90);
    dim(1070.3, 753, 1127.6, 753);
    dimLine(1070.3, 737.7, 1070.3, 761.7);
    dimLine(1127.6, 737.7, 1127.6, 761.7);
    label(1098, 741.7, '29');

    // lower part
    out.push(`<path class="d" fill="none" d="M1013.400 722.700A57 57 0 0 0 1056.500 776.900"/>`);
    arrow(1013.4, 722.7, -86);
    arrow(1056.5, 776.9, 15);
    label(1034.7, 746.7, '78°', 52);
    dim(937.8, 822.3, 1045.8, 822.3);
    dimLine(937.8, 812.7, 937.8, 822.3);
    dimLine(1045.8, 813.3, 1045.8, 824);
    label(991, 810.7, '55');
    dimLine(872.6, 871.7, 937.8, 812.7);
    arrow(916.8, 831.7, -42);
    label(878.5, 854, 'R14', -42);
    dim(1087.3, 850, 1077.4, 900);
    dimLine(1062.4, 844, 1095.2, 851);
    dimLine(1051.7, 895.7, 1084.1, 902.3);
    label(1070.3, 872.3, '27', -79);
    out.push(`<rect x="1089.500" y="890.500" width="1" height="1" fill="#ccc"/>`);
    dim(781.7, 930, 1034.7, 930);
    dimLine(781.7, 909, 781.7, 938.3);
    dimLine(1034.7, 909, 1034.7, 938.3);
    label(908.2, 919, '130');
    out.push(`<path class="d" fill="none" d="M814.900 890.500A34 34 0 0 0 759 866.800"/>`);
    arrow(814.9, 890.5, 88);
    arrow(759, 866.8, 140);
    label(799.5, 848.3, '136°', 15);
    dim(724.3, 777.3, 696.6, 807.3);
    dimLine(678.9, 793.3, 700.6, 814);
    label(700.6, 784, '23', -48);
    dim(635.4, 815, 708.5, 888.3);
    dim(708.5, 888.3, 748, 925);
    dimLine(654.3, 793.3, 628.6, 820);
    dimLine(729.5, 866.7, 704.6, 892.7);
    dimLine(769.8, 904.3, 743.3, 931);
    label(678.9, 841.7, '54', 48);
    label(737.4, 897.3, '28', 48);

    // crosshair running to the left, and its arrowhead at the edge
    out.push(`<path d="M0 957.500H322" stroke="#eee" stroke-width="1"/><path d="M6 952L0 960L6 968" fill="none" stroke="#ccc"/>`);

    // view cube, cut off by the window edge
    out.push(`<circle cx="1735" cy="310" r="58.500" fill="none" stroke="#2b2b2b" stroke-width="13"/>
      <rect x="1707" y="282" width="40" height="55" fill="#bfc0c0"/>
      <rect x="1717" y="293" width="20" height="34" fill="#a9b3b2"/>
      <path d="M1717 318h20" stroke="#777"/>
      <text class="c" x="1673" y="318" text-anchor="middle">西</text>
      <text class="c" x="1734" y="252" text-anchor="middle">北</text>
      <text class="c" x="1734" y="382" text-anchor="middle">南</text>
      <rect x="1706" y="405" width="40" height="19" rx="4" fill="#6e6e6e" stroke="#8e8e8e"/>
      <text x="1710" y="420" font-family="Open Sans" font-size="13" fill="#a8a8a8">WCS</text>`);

    return `<style>
      :host{display:block;position:absolute;inset:0}
      svg{display:block}
      .d{stroke:#dcdcdc;stroke-width:1}
      .a{fill:#ececec}
      .t{font:100 21px Roboto,"Noto Sans",sans-serif;letter-spacing:1.500px;fill:#f2f2f2;stroke:#f2f2f2;stroke-width:.25}
      .c{font:20px "Noto Sans CJK SC",sans-serif;fill:#bcbcbc}
      </style>
      <svg width="1728" height="768" viewBox="0 220 1728 768">${out.join('')}</svg>`;
  }
}

class CadCanvas extends ShadowElement {
  render() {
    return `<style>
      :host{display:flex;flex-direction:column;justify-content:flex-end;height:768px;background:#000;position:relative;overflow:hidden}
      .prompt{position:absolute;left:402px;top:711px;height:19px;line-height:19px;padding:0 2px;background:#222;color:#4e4e4e;font:15.500px "Liberation Mono","Noto Sans CJK SC",monospace;white-space:pre}
      </style>
      <cad-drawing></cad-drawing>
      <div class="prompt">指定对角点或 [栏选(F)/圈围(WP)/圈交(CP)]:</div>
      <slot></slot>`;
  }
}

class CadCommand extends ShadowElement {
  render() {
    return `<style>${caretCss}
      :host{display:flex;height:32px;margin-left:322px;width:1082px;position:relative}
      .tools{display:flex;align-items:center;width:72px;background:#2d3643;flex:none}
      .grip{width:6px;height:24px;margin-left:5px;background-image:radial-gradient(circle,#aab1b8 1.100px,transparent 1.300px);background-size:3px 4px}
      .x{color:#c4c9cf;font:700 17px "Liberation Sans",sans-serif;margin-left:9px}
      .input{flex:1;display:flex;align-items:center;background:linear-gradient(#bcbcbc,#b0b0b0);color:#676767;font-style:italic;font-size:15px}
      .up{width:0;height:0;border:5px solid transparent;border-bottom:6px solid #4a4a4a;border-top:0;margin:0 5px 0 auto}
      </style>
      <div class="tools"><i class="grip"></i><span class="x">×</span><cad-icon name="wrench" size="22" style="margin-left:11px"></cad-icon></div>
      <div class="input"><cad-icon name="term" size="22" style="margin-left:3px"></cad-icon><i class="caret" style="border-top-color:#444;margin-left:5px"></i><span style="margin-left:8px">鍵入命令</span><i class="up"></i></div>`;
  }
}

class CadStatus extends ShadowElement {
  render() {
    return `<style>
      :host{display:flex;align-items:center;height:42px;box-sizing:border-box;background:#1f2a38;border-top:5px solid #3c4656;border-bottom:2px solid #263140;gap:3px;color:#d2d5d9;font-size:15px}
      .tabs{display:flex;align-items:center;width:1035px;flex:none;height:35px;color:#cfd3d7}
      .cur{width:20px;height:100%;background:#2f3a4a;clip-path:polygon(0 0,100% 0,70% 100%,0 100%);overflow:hidden;line-height:33px;flex:none}
      .cur span{margin-left:-9px}
      .sl{width:1px;height:22px;background:#4a5564;transform:skewX(-20deg);margin:0 15px}
      </style>
      <div class="tabs"><div class="cur"><span>型</span></div><span style="margin-left:17px">布局1</span><i class="sl" style="margin-left:17px"></i><span>CAD江老师</span><i class="sl"></i><cad-icon name="plus" size="20" style="margin-left:3px"></cad-icon><i class="sl"></i></div>
      <slot></slot>`;
  }
}

class StatusGroup extends ShadowElement {
  render() {
    return `<style>:host{display:flex;flex:none}</style><slot></slot>`;
  }
}

class StatusBtn extends ShadowElement {
  render() {
    const w = this.getAttribute('w');
    const text = this.getAttribute('text');
    const icon = this.getAttribute('icon');
    return `<style>${caretCss}
      :host{display:flex;align-items:center;justify-content:center;flex:none;width:${w}px;height:30px;background:#3a4657;color:#dfe2e5;white-space:nowrap;overflow:hidden}
      :host([on]){background:#5b8fc6}
      .caret{border-width:5px;border-top-width:6px}
      </style>
      ${text ? `<span>${text}</span>` : ''}
      ${icon ? `<cad-icon name="${icon}" size="21"></cad-icon>` : ''}
      ${this.hasAttribute('caret') ? '<i class="caret"></i>' : ''}`;
  }
}

class CadTaskbar extends ShadowElement {
  render() {
    // name, cell width, gap before it, has the running bar
    const apps = [
      ['tbCad', 52, 18, false], ['tbEdge', 52, 10, false], ['tbFolder', 51, 11, true],
      ['tbTool', 52, 10, true], ['tbAcad', 61, 6, true], ['tbWps', 51, 6, true], ['tbChat', 51, 11, true]
    ];
    return `<style>
      :host{display:flex;align-items:center;height:50px;background:#1b1917;color:#eee;position:relative}
      .search{display:flex;align-items:center;width:160px;height:28px;background:#a8a8a8;color:#4a4a4a;font:13px "Liberation Mono","Noto Sans CJK SC",monospace;flex:none}
      .search i{width:2px;height:16px;background:#eee;margin:0 9px 0 8px}
      .app{position:relative;display:flex;align-items:center;justify-content:center;height:50px;flex:none}
      .app.run::after{content:"";position:absolute;left:0;right:0;bottom:0;height:3px;background:#6aa5d8}
      .app.cur{background:#4a4a4a}
      .tray{display:flex;align-items:center;margin-left:auto;gap:9px}
      .en{font-size:20px;font-family:"Noto Sans CJK SC",sans-serif}
      .bar{width:2px;height:16px;background:#fff;margin-left:9px}
      </style>
      <div class="search"><i></i><span>Alt+S快搜</span><cad-icon name="searchTb" size="20" style="margin-left:auto;margin-right:7px"></cad-icon></div>
      ${apps.map(([n, w, gap, run]) => `<div class="app ${run ? 'run' : ''} ${n === 'tbAcad' ? 'cur' : ''}" style="width:${w}px;margin-left:${gap}px"><cad-icon name="${n}" size="${n === 'tbAcad' ? 32 : 30}"></cad-icon></div>`).join('')}
      <div class="tray">
        <cad-icon name="chevron" size="18"></cad-icon>
        <cad-icon name="mic" size="24" style="margin-left:-1px"></cad-icon>
        <cad-icon name="batt" size="20"></cad-icon>
        <cad-icon name="wifi" size="18" style="margin-left:3px"></cad-icon>
        <cad-icon name="speaker" size="20"></cad-icon>
        <span class="en">英</span><i class="bar"></i>
      </div>`;
  }
}

// Define the custom elements
customElements.define('cad-icon', CadIcon);
customElements.define('cad-app', CadApp);
customElements.define('cad-titlebar', CadTitlebar);
customElements.define('cad-menubar', CadMenubar);
customElements.define('cad-tabbar', CadTabbar);
customElements.define('cad-ribbon', CadRibbon);
customElements.define('ribbon-panel', RibbonPanel);
customElements.define('rb-big', RbBig);
customElements.define('rb-col', RbCol);
customElements.define('rb-small', RbSmall);
customElements.define('rb-combo', RbCombo);
customElements.define('rb-iconrow', RbIconrow);
customElements.define('cad-drawing', CadDrawing);
customElements.define('cad-canvas', CadCanvas);
customElements.define('cad-command', CadCommand);
customElements.define('cad-status', CadStatus);
customElements.define('status-group', StatusGroup);
customElements.define('status-btn', StatusBtn);
customElements.define('cad-taskbar', CadTaskbar);
</script>
</body>
</html>
